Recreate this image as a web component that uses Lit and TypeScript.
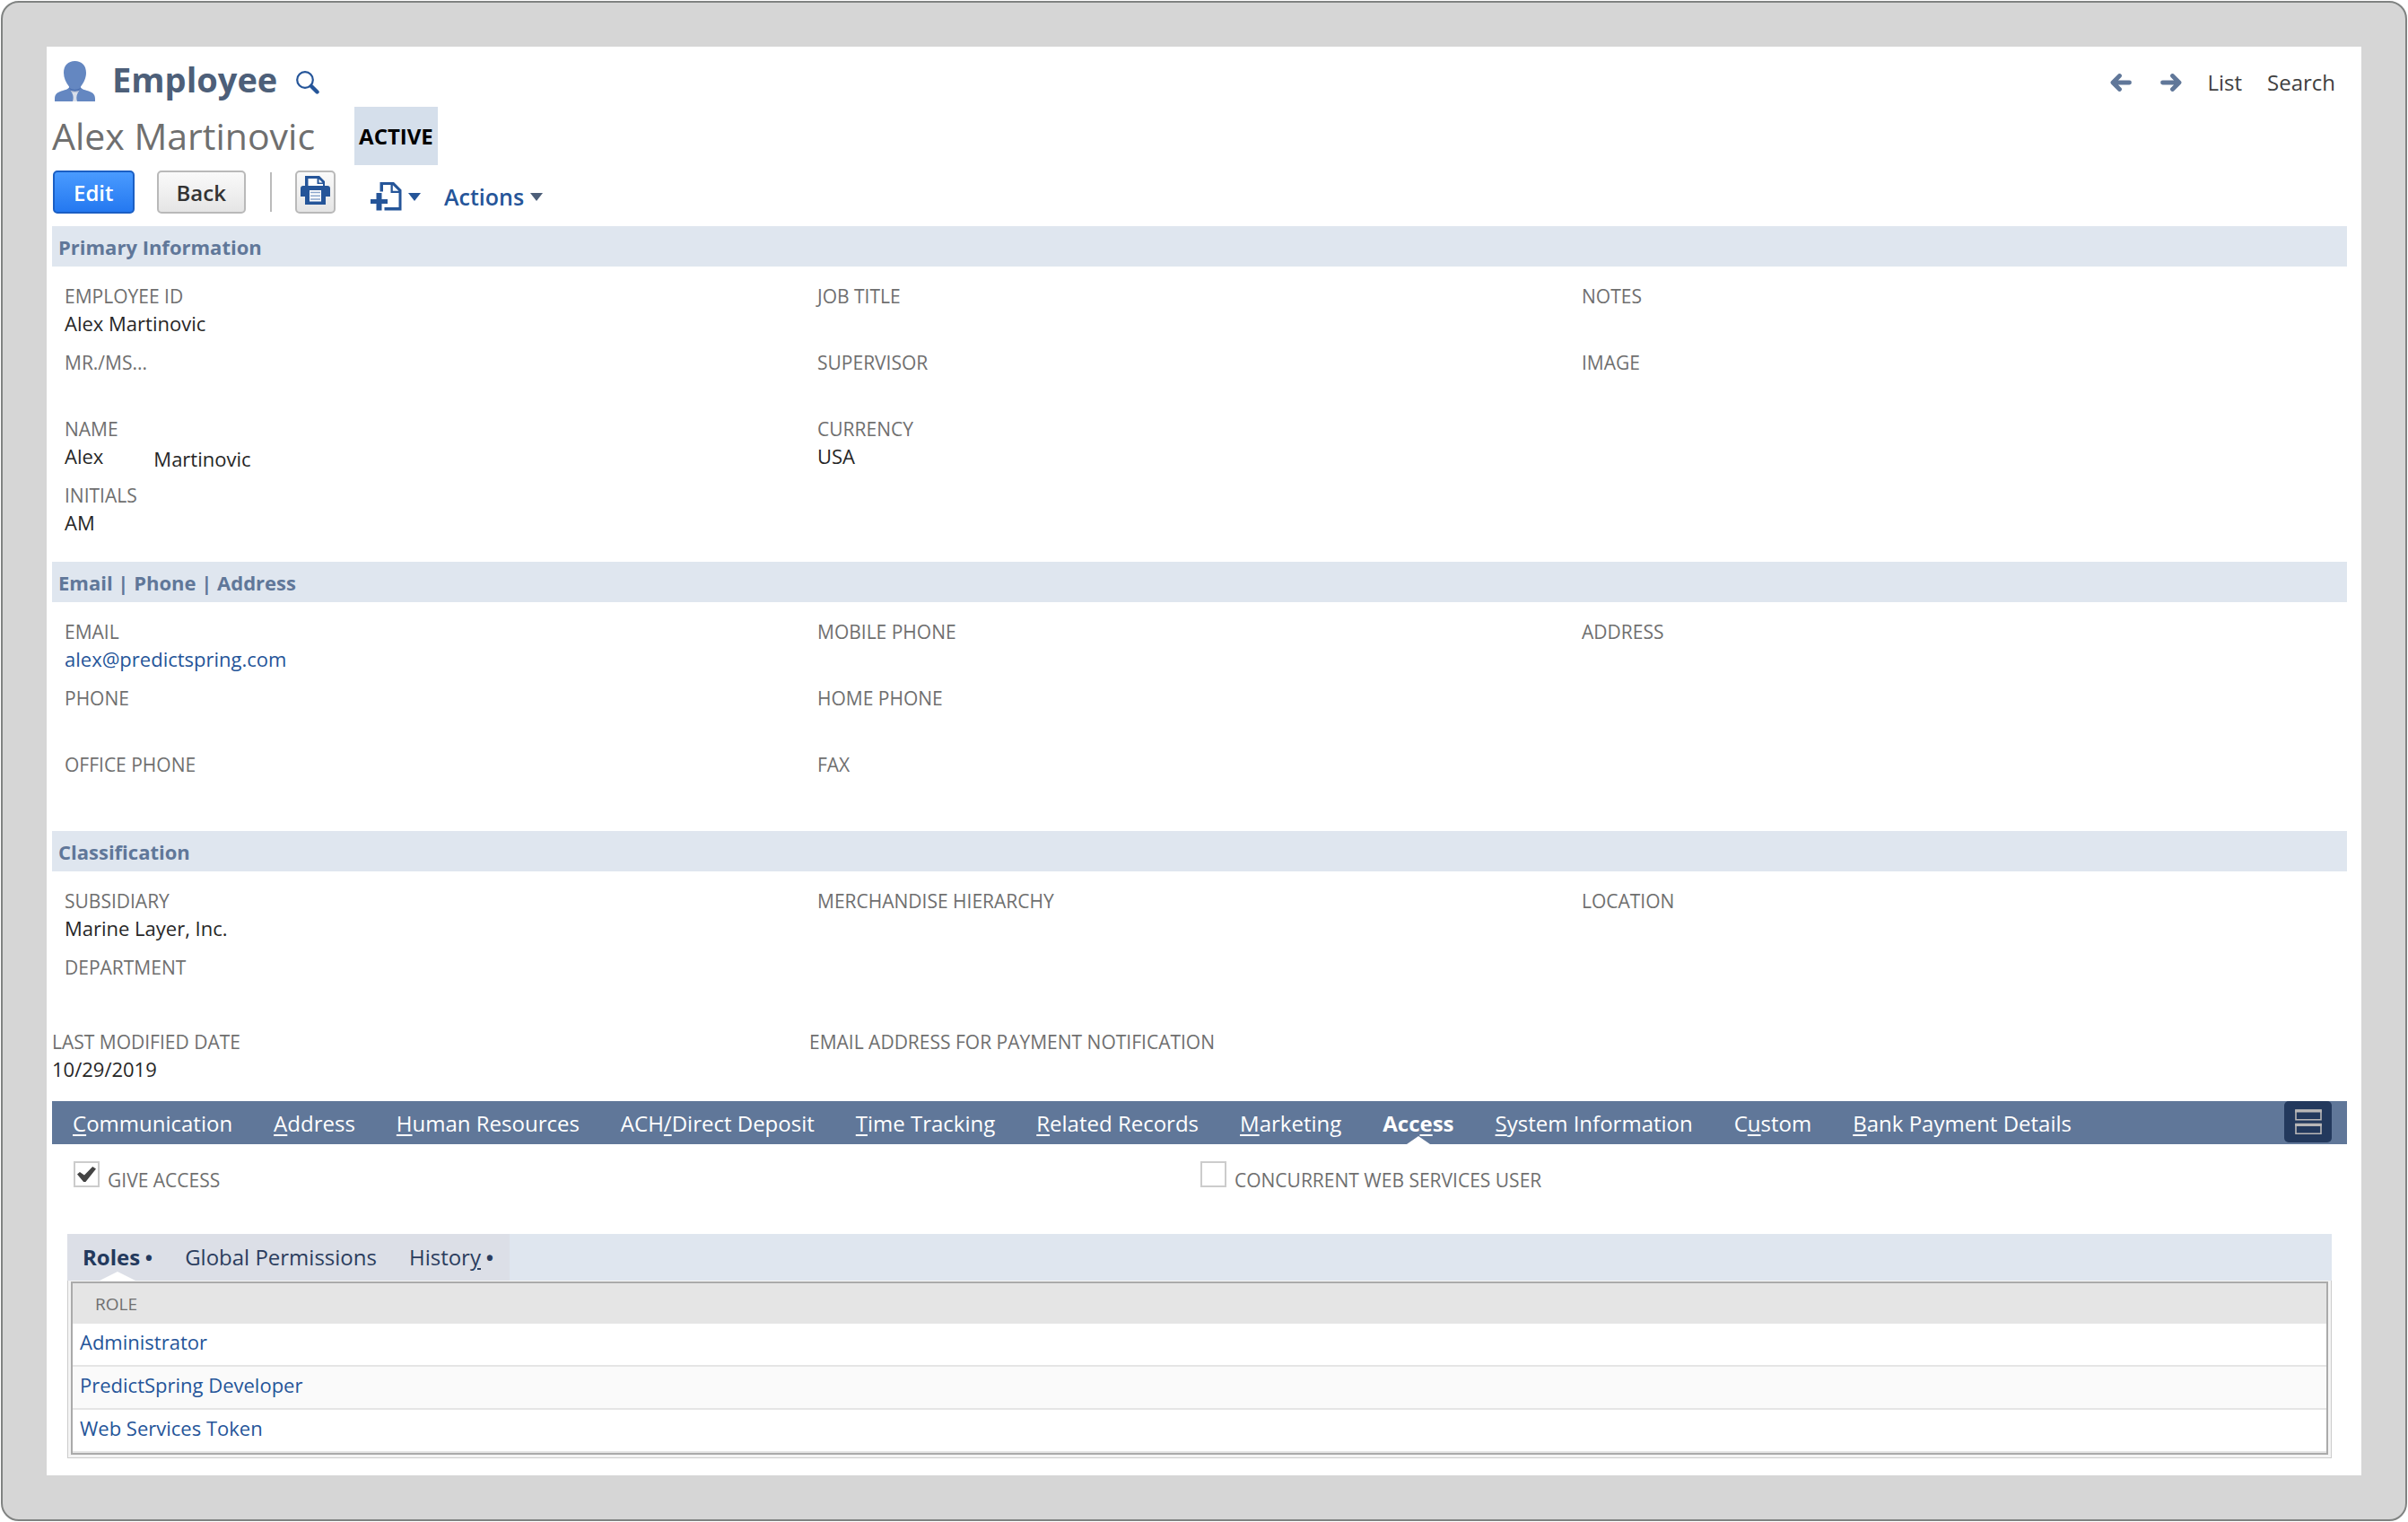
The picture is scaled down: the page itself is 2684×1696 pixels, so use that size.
import { LitElement, html, css, svg, nothing } from "lit";
import { customElement, property, state } from "lit/decorators.js";
import { classMap } from "lit/directives/class-map.js";

interface Field {
  label: string;
  value?: string;
  extra?: string;
  href?: string;
}

interface Tab {
  before: string;
  key: string;
  after: string;
  dot?: boolean;
}

const PRIMARY: Field[][] = [
  [
    { label: "EMPLOYEE ID", value: "Alex Martinovic" },
    { label: "MR./MS..." },
    { label: "NAME", value: "Alex", extra: "Martinovic" },
    { label: "INITIALS", value: "AM" },
  ],
  [{ label: "JOB TITLE" }, { label: "SUPERVISOR" }, { label: "CURRENCY", value: "USA" }],
  [{ label: "NOTES" }, { label: "IMAGE" }],
];

const CONTACT: Field[][] = [
  [
    { label: "EMAIL", value: "alex@predictspring.com", href: "mailto:alex@predictspring.com" },
    { label: "PHONE" },
    { label: "OFFICE PHONE" },
  ],
  [{ label: "MOBILE PHONE" }, { label: "HOME PHONE" }, { label: "FAX" }],
  [{ label: "ADDRESS" }],
];

const CLASSIFICATION: Field[][] = [
  [{ label: "SUBSIDIARY", value: "Marine Layer, Inc." }, { label: "DEPARTMENT" }],
  [{ label: "MERCHANDISE HIERARCHY" }],
  [{ label: "LOCATION" }],
];

const TABS: Tab[] = [
  { before: "", key: "C", after: "ommunication" },
  { before: "", key: "A", after: "ddress" },
  { before: "", key: "H", after: "uman Resources" },
  { before: "ACH", key: "/", after: "Direct Deposit" },
  { before: "", key: "T", after: "ime Tracking" },
  { before: "", key: "R", after: "elated Records" },
  { before: "", key: "M", after: "arketing" },
  { before: "Acc", key: "e", after: "ss" },
  { before: "", key: "S", after: "ystem Information" },
  { before: "C", key: "u", after: "stom" },
  { before: "", key: "B", after: "ank Payment Details" },
];

const SUBTABS: Tab[] = [
  { before: "Roles", key: "", after: "", dot: true },
  { before: "Global Permissions", key: "", after: "" },
  { before: "Histor", key: "y", after: "", dot: true },
];

const ROLES = ["Administrator", "PredictSpring Developer", "Web Services Token"];

const personIcon = svg`
  <svg class="person" viewBox="0 0 45 45" aria-hidden="true">
    <path fill="#d9dfea" d="M16 31h13l1 14H16z"/>
    <path fill="#b9c3d6" d="M17 31h11l-2 4h-7z"/>
    <path fill="#6487c1" d="M22.500 0C30 0 35 5 35 13c0 6-2.500 11-6 15.500V31c-3 2.500-10 2.500-13 0v-2.500C12.500 24 10 19 10 13 10 5 15 0 22.500 0z"/>
    <path fill="#6487c1" d="M16 29.500c-1.500 2-4 2.500-7 3.500-5 1.500-9 3-9 9v3h20c1-3 1-6-.5-9-1-2-2.500-4-3.500-6.500zM29 29.500c1.500 2 4 2.500 7 3.500 5 1.500 9 3 9 9v3H25c-1-3-1-6 .5-9 1-2 2.500-4 3.500-6.500z"/>
    <path fill="#4f73b3" d="M16 29.500c4 3 9 3 13 0l-1 3c-3 1.500-8 1.500-11 0z"/>
  </svg>`;

const searchIcon = svg`
  <svg class="search-icon" viewBox="0 0 26 26" aria-hidden="true">
    <circle cx="10" cy="10" r="8.800" fill="none" stroke="#255599" stroke-width="2.200"/>
    <path d="M17 17l6.500 6.500" stroke="#255599" stroke-width="4.400" stroke-linecap="round"/>
  </svg>`;

const printIcon = svg`
  <svg class="print-icon" viewBox="0 0 33 32" aria-hidden="true">
    <path fill="#255599" d="M5 0h16l6 6v5h3a3 3 0 0 1 3 3v9h-5v9H5v-9H0v-9a3 3 0 0 1 3-3h2z"/>
    <path fill="#fff" d="M8.500 3h10v6H25v2H8.500z"/>
    <path fill="#fff" d="M20.500 3.500l4 4h-4z"/>
    <path fill="#fff" d="M10 16h13v12.500H10z"/>
    <path d="M11 18.500h11M11 22.300h11M11 26h11" stroke="#8aa5cc" stroke-width="1.600"/>
  </svg>`;

const newIcon = svg`
  <svg class="new-icon" viewBox="0 0 35 32" aria-hidden="true">
    <path fill="#255599" fill-rule="evenodd" d="M10.500 0H26l8.500 8.500v23h-19v-3.500h16V12H22.500V3H14v7.500h-3.500zM24.800 3.300V9.800H31.300z"/>
    <path fill="#255599" d="M6.500 12h6v7H19v5h-6.500v7.500h-6V24H0v-5h6.500z"/>
  </svg>`;

const arrow = (flip: boolean) => svg`
  <svg class="arrow" viewBox="0 0 24 20" aria-hidden="true">
    <path transform=${flip ? "translate(24 0) scale(-1 1)" : "translate(0 0)"} d="M10.500 2.500L3 10l7.500 7.500M4 10h17.500" fill="none" stroke="#607799" stroke-width="4.800" stroke-linecap="round" stroke-linejoin="round"/>
  </svg>`;

const layoutIcon = svg`
  <svg class="layout-icon" viewBox="0 0 30 28" aria-hidden="true">
    <path fill="none" stroke="#b9b7b7" stroke-width="1.600" d="M1 1h28v10.700H1zM1 16.500h28v10.700H1z"/>
    <path stroke="#b9b7b7" stroke-width="3" d="M.2 2h29.600M.2 17.500h29.600"/>
  </svg>`;

@customElement("field-group")
class FieldGroup extends LitElement {
  @property() heading = "";
  @property({ attribute: false }) columns: Field[][] = [];

  static styles = css`
    :host { display: block; }
    .heading {
      margin: 0; padding: 1px 7px 0; background: #dfe6ef; color: #607799;
      font-size: 22px; font-weight: 700; line-height: 44px;
    }
    .columns {
      display: grid; grid-template-columns: 839fr 852fr 853fr;
      padding: 18px 0 15px 14px;
    }
    dl { margin: 0; }
    .field { min-height: 74px; line-height: 31px; }
    dt { color: #6f6f6f; font-size: 21px; line-height: 30px; }
    dd { margin: 0; color: #262626; font-size: 22px; }
    .extra { display: inline-block; padding: 3px 0 0 56px; line-height: 30px; vertical-align: top; }
    a { color: #255599; text-decoration: none; }
  `;

  render() {
    return html`
      <h2 class="heading">${this.heading}</h2>
      <div class="columns">
        ${this.columns.map(
          (column) => html`<dl>
            ${column.map(
              (f) => html`<div class="field">
                <dt>${f.label}</dt>
                ${f.value
                  ? html`<dd>${f.href ? html`<a href=${f.href}>${f.value}</a>` : f.value}${f.extra
                        ? html`<span class="extra">${f.extra}</span>`
                        : nothing}</dd>`
                  : nothing}
              </div>`
            )}
          </dl>`
        )}
      </div>
    `;
  }
}

@customElement("app-root")
class AppRoot extends LitElement {
  @state() private tab = 7;
  @state() private subtab = 0;

  static styles = css`
    :host {
      display: block; box-sizing: border-box; min-height: 100vh; padding: 1px;
      background: #fff; font-family: "Open Sans", sans-serif; color: #262626;
    }
    .frame {
      box-sizing: border-box; min-height: calc(100vh - 2px); padding: 49px;
      border: 2px solid #808382; border-radius: 20px; background: #d6d6d6;
    }
    .page { background: #fff; padding: 12px 16px 19px 6px; }
    a { color: #255599; text-decoration: none; }
    button { font-family: inherit; margin: 0; cursor: pointer; }
    .top { display: flex; justify-content: space-between; align-items: center; height: 52px; padding-right: 13px; }
    .title { display: flex; align-items: center; padding-left: 3px; }
    .person { width: 45px; height: 45px; margin-right: 19px; }
    h1 { margin: 0; padding-bottom: 4px; color: #4d5f79; font-size: 38px; font-weight: 700; line-height: 48px; }
    .search-button { display: flex; margin-left: 21px; padding: 4px 0 0; border: 0; background: none; }
    .search-icon { width: 26px; height: 26px; }
    .links { display: flex; align-items: center; padding-top: 4px; font-size: 24px; line-height: 32px; }
    .links a { display: flex; color: #404040; margin-left: 28px; }
    .links .step { margin-left: 32px; }
    .arrow { width: 24px; height: 20px; }
    .name-row { display: flex; align-items: center; height: 70px; }
    .name { color: #6f6f6f; font-size: 41px; line-height: 56px; margin-right: 44px; }
    .status {
      padding: 0 5px; background: #d5dfeb; color: #000;
      font-size: 24px; font-weight: 700; line-height: 65px;
    }
    .actions { display: flex; align-items: center; height: 48px; margin-bottom: 14px; padding: 4px 0 0 1px; }
    .btn {
      height: 48px; box-sizing: border-box; border: 2px solid #b9b9b9; border-radius: 5px;
      background: linear-gradient(#fafafa, #e5e5e5); color: #333;
      font-size: 24px; font-weight: 600; line-height: 32px; padding: 2px 20px 0;
    }
    .primary { background: linear-gradient(#4a9bff, #2478f0); border-color: #1b5fc4; color: #fff; padding: 2px 21px 0; margin-right: 25px; }
    .rule { width: 2px; height: 44px; background: #bbb; margin: 0 26px 0 27px; }
    .print { padding: 0 4px; display: flex; align-items: center; margin-right: 39px; }
    .print-icon { width: 33px; height: 32px; margin-bottom: 4px; }
    .menu {
      display: flex; align-items: center; gap: 7px; padding: 10px 0 0; border: 0; background: none;
      color: #255599; font-size: 25px; font-weight: 600; line-height: 32px;
    }
    .new { margin-right: 26px; }
    .new-icon { width: 35px; height: 32px; }
    .caret { border: 7px solid transparent; border-top: 9px solid #4d5f79; border-bottom: 0; }
    .new .caret { border-top-color: #255599; }
    .meta { display: grid; grid-template-columns: 844fr 1714fr; margin-top: -7px; padding-top: 1px; height: 81px; }
    .meta dl { margin: 0; }
    .meta dt { color: #6f6f6f; font-size: 21px; line-height: 30px; }
    .meta dd { margin: 0; font-size: 22px; line-height: 31px; }
    .tabs { display: flex; align-items: stretch; height: 48px; background: #607799; padding: 0 17px 0 23px; gap: 46px; }
    .tab {
      position: relative; border: 0; padding: 1px 0 0; background: none; color: #fff;
      font-size: 24px; line-height: 47px; white-space: nowrap;
    }
    .tab.on { font-weight: 700; }
    .tab.on::after, .subtab.on::after {
      content: ""; position: absolute; left: 50%; bottom: 0; margin-left: -13px;
      border: 13px solid transparent; border-top: 0; border-bottom: 9px solid #fff;
    }
    .subtab.on::after { margin-left: -20px; border-width: 0 20px 10px; }
    .key { text-decoration: underline; text-decoration-thickness: 2px; text-underline-offset: 3px; }
    .layout {
      margin-left: auto; width: 53px; height: 46px; padding: 0; border: 0; border-radius: 5px;
      background: #23395d; display: flex; align-items: center; justify-content: center;
    }
    .layout-icon { width: 30px; height: 28px; }
    .checks { display: grid; grid-template-columns: 1256fr 1278fr; height: 100px; padding-left: 24px; box-sizing: border-box; }
    .check { display: flex; align-items: flex-start; padding-top: 19px; color: #6f6f6f; font-size: 21px; line-height: 42px; height: 42px; }
    .check input {
      appearance: none; width: 29px; height: 29px; margin: 0 9px 0 0; box-sizing: border-box;
      border: 2px solid #ccc; background: #fff; display: grid; place-items: center;
    }
    .check input:checked::before {
      content: ""; width: 21px; height: 17px; background: #444;
      clip-path: polygon(0 50%, 14% 35%, 38% 56%, 82% 0, 100% 14%, 45% 100%, 34% 100%);
    }
    .sub { margin: 0 17px; }
    .subtabs { display: flex; background: #dfe6ef; }
    .subgroup { display: flex; gap: 36px; padding: 0 18px 0 17px; background: #dcdfe7; }
    .subtab {
      position: relative; border: 0; padding: 0 0 1px; background: none; color: #2b3d5e;
      font-size: 24px; line-height: 51px; white-space: nowrap;
    }
    .subtab.on { font-weight: 700; color: #23395d; }
    .dot { font-size: 22px; font-weight: 700; line-height: 22px; }
    .table-wrap { border: 1px solid #ccc; border-top: 0; padding: 1px 3px 3px; background: #f4f4f4; }
    table { width: 100%; border-collapse: separate; border-spacing: 0; border: 2px solid #aaa; background: #fff; }
    th { height: 45px; padding: 0 25px; background: #e5e5e5; color: #6f6f6f; font-size: 19px; font-weight: 400; text-align: left; }
    td { height: 38px; padding: 1px 8px 7px; border-bottom: 2px solid #e5e5e5; font-size: 22px; line-height: 30px; }
    tr:nth-child(even) td { background: #fafafa; }
  `;

  private label(t: Tab) {
    return html`${t.before}<span class="key">${t.key}</span>${t.after}${t.dot ? html`<span class="dot"> •</span>` : nothing}`;
  }

  render() {
    return html`
      <div class="frame">
        <main class="page">
          <header class="top">
            <div class="title">
              ${personIcon}
              <h1>Employee</h1>
              <button class="search-button" aria-label="Search employees">${searchIcon}</button>
            </div>
            <nav class="links">
              <a class="step" href="#previous" aria-label="Previous">${arrow(false)}</a>
              <a class="step" href="#next" aria-label="Next">${arrow(true)}</a>
              <a href="#list">List</a>
              <a href="#search">Search</a>
            </nav>
          </header>
          <div class="name-row">
            <div class="name">Alex Martinovic</div>
            <div class="status">ACTIVE</div>
          </div>
          <div class="actions">
            <button class="btn primary">Edit</button>
            <button class="btn">Back</button>
            <span class="rule"></span>
            <button class="btn print" aria-label="Print">${printIcon}</button>
            <button class="menu new" aria-label="New record">${newIcon}<span class="caret"></span></button>
            <button class="menu">Actions<span class="caret"></span></button>
          </div>
          <field-group heading="Primary Information" .columns=${PRIMARY}></field-group>
          <field-group heading="Email | Phone | Address" .columns=${CONTACT}></field-group>
          <field-group heading="Classification" .columns=${CLASSIFICATION}></field-group>
          <div class="meta">
            <dl><dt>LAST MODIFIED DATE</dt><dd>10/29/2019</dd></dl>
            <dl><dt>EMAIL ADDRESS FOR PAYMENT NOTIFICATION</dt></dl>
          </div>
          <nav class="tabs">
            ${TABS.map(
              (t, i) => html`<button class=${classMap({ tab: true, on: i === this.tab })} @click=${() => (this.tab = i)}>${this.label(t)}</button>`
            )}
            <button class="layout" aria-label="Toggle layout">${layoutIcon}</button>
          </nav>
          <div class="checks">
            <label class="check"><input type="checkbox" checked />GIVE ACCESS</label>
            <label class="check"><input type="checkbox" />CONCURRENT WEB SERVICES USER</label>
          </div>
          <section class="sub">
            <div class="subtabs">
              <div class="subgroup">
                ${SUBTABS.map(
                  (t, i) => html`<button class=${classMap({ subtab: true, on: i === this.subtab })} @click=${() => (this.subtab = i)}>${this.label(t)}</button>`
                )}
              </div>
            </div>
            <div class="table-wrap">
              <table>
                <thead><tr><th scope="col">ROLE</th></tr></thead>
                <tbody>
                  ${ROLES.map((r) => html`<tr><td><a href="#role">${r}</a></td></tr>`)}
                </tbody>
              </table>
            </div>
          </section>
        </main>
      </div>
    `;
  }
}
